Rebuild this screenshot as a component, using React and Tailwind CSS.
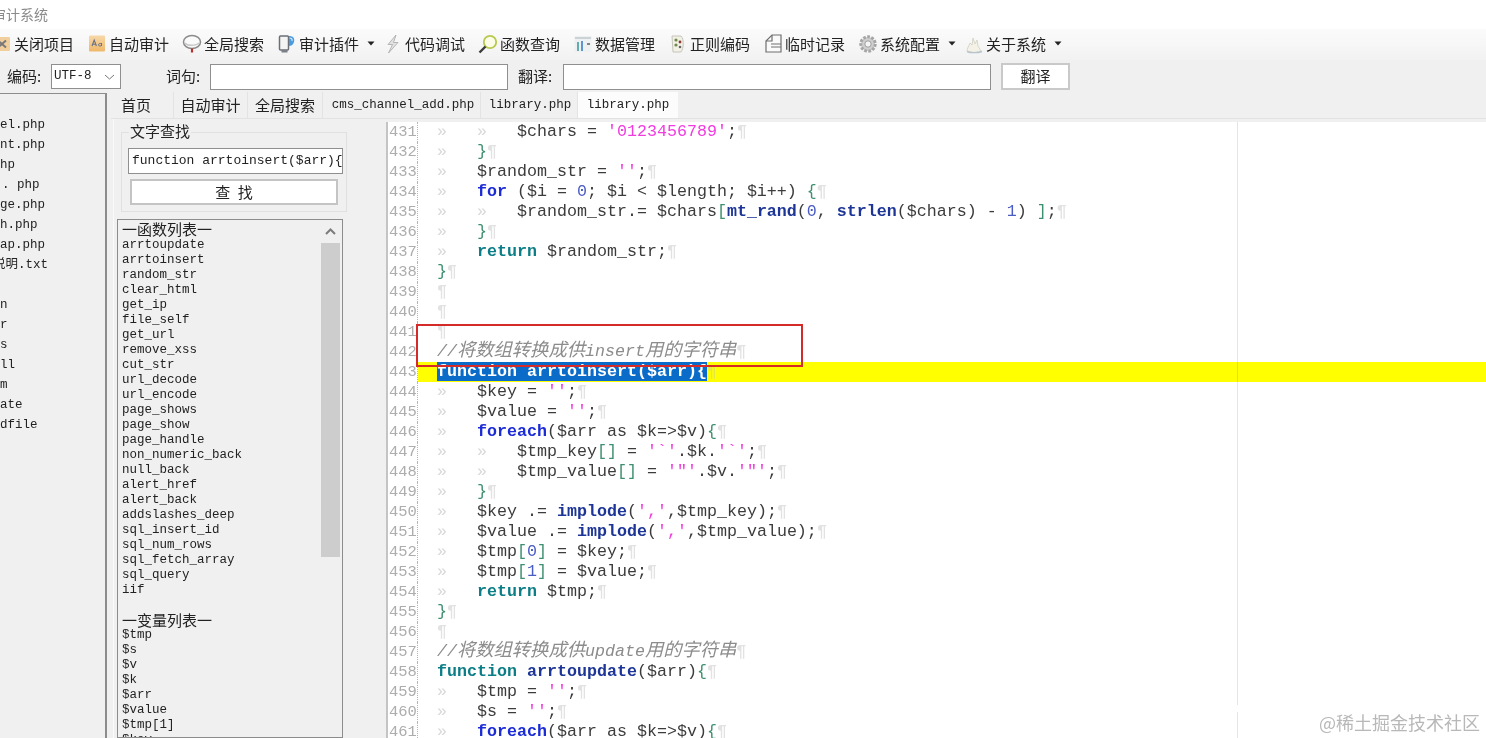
import React from "react";

const CJK = { fontFamily: '"Noto Sans CJK SC", "Liberation Sans", sans-serif' };
const MONO = { fontFamily: '"Liberation Mono", "Noto Sans CJK SC", monospace' };

const C = {
  v: "text-[#3c3c3c]",
  s: "text-[#f23ce0]",
  k: "text-[#1b2bd6] font-bold",
  r: "text-[#0b7d86] font-bold",
  f: "text-[#1d3596] font-bold",
  b: "text-[#3f9070]",
  n: "text-[#4a5cc4]",
  c: "text-[#8c8c8c] italic",
  t: "text-[#d8d8d8]",
  p: "text-[#e2e2e2] font-bold",
};

const T1 = ["t", "»   "];
const CMT = ({ a, m, z }) => (
  <span className={C.c}>
    {"//"}
    <span className="text-[18.3px] leading-[0]" style={CJK}>{a}</span>
    {m}
    <span className="text-[18.3px] leading-[0]" style={CJK}>{z}</span>
  </span>
);

const lines = [
  [T1, T1, ["v", "$chars = "], ["s", "'0123456789'"], ["v", ";"]],
  [T1, ["b", "}"]],
  [T1, ["v", "$random_str = "], ["s", "''"], ["v", ";"]],
  [T1, ["k", "for"], ["v", " ($i = "], ["n", "0"], ["v", "; $i < $length; $i++) "], ["b", "{"]],
  [T1, T1, ["v", "$random_str.= $chars"], ["b", "["], ["f", "mt_rand"], ["v", "("], ["n", "0"], ["v", ", "], ["f", "strlen"], ["v", "($chars) - "], ["n", "1"], ["v", ") "], ["b", "]"], ["v", ";"]],
  [T1, ["b", "}"]],
  [T1, ["r", "return"], ["v", " $random_str;"]],
  [["b", "}"]],
  [],
  [],
  [],
  "c1",
  "sel",
  [T1, ["v", "$key = "], ["s", "''"], ["v", ";"]],
  [T1, ["v", "$value = "], ["s", "''"], ["v", ";"]],
  [T1, ["k", "foreach"], ["v", "($arr as $k=>$v)"], ["b", "{"]],
  [T1, T1, ["v", "$tmp_key"], ["b", "[]"], ["v", " = "], ["s", "'`'"], ["v", ".$k."], ["s", "'`'"], ["v", ";"]],
  [T1, T1, ["v", "$tmp_value"], ["b", "[]"], ["v", " = "], ["s", "'\"'"], ["v", ".$v."], ["s", "'\"'"], ["v", ";"]],
  [T1, ["b", "}"]],
  [T1, ["v", "$key .= "], ["f", "implode"], ["v", "("], ["s", "','"], ["v", ",$tmp_key);"]],
  [T1, ["v", "$value .= "], ["f", "implode"], ["v", "("], ["s", "','"], ["v", ",$tmp_value);"]],
  [T1, ["v", "$tmp"], ["b", "["], ["n", "0"], ["b", "]"], ["v", " = $key;"]],
  [T1, ["v", "$tmp"], ["b", "["], ["n", "1"], ["b", "]"], ["v", " = $value;"]],
  [T1, ["r", "return"], ["v", " $tmp;"]],
  [["b", "}"]],
  [],
  "c2",
  [["r", "function"], ["v", " "], ["f", "arrtoupdate"], ["v", "($arr)"], ["b", "{"]],
  [T1, ["v", "$tmp = "], ["s", "''"], ["v", ";"]],
  [T1, ["v", "$s = "], ["s", "''"], ["v", ";"]],
  [T1, ["k", "foreach"], ["v", "($arr as $k=>$v)"], ["b", "{"]],
];

function CodeRow({ line, num }) {
  const sel = line === "sel";
  let body;
  if (sel) {
    body = <span className="bg-[#0a6cc8] text-white font-bold">{"function arrtoinsert($arr){"}</span>;
  } else if (line === "c1") {
    body = <CMT a="将数组转换成供" m="insert" z="用的字符串" />;
  } else if (line === "c2") {
    body = <CMT a="将数组转换成供" m="update" z="用的字符串" />;
  } else {
    body = line.map(([k, txt], i) => (
      <span key={i} className={C[k]}>{txt}</span>
    ));
  }
  return (
    <div className="flex h-5 shrink-0 leading-5">
      <div className="w-[30px] shrink-0 border-r border-dotted border-[#b5b5b5] pl-[1px] text-[15.5px] text-[#adadad]">{num}</div>
      <div className={`flex-1 whitespace-pre pl-[19px] text-[16.67px] ${sel ? "bg-[#ffff00]" : ""}`}>
        {body}
        <span className={sel ? "text-[#e6e64a] font-bold" : C.p}>¶</span>
      </div>
    </div>
  );
}

const Caret = () => (
  <svg width="8" height="5" viewBox="0 0 8 5" className="shrink-0"><path d="M0.5 0.5h7L4 4.5z" fill="#222" /></svg>
);

const icons = {
  close: (
    <svg width="16" height="16" viewBox="0 0 16 16"><rect x="0" y="1" width="16" height="14" rx="1" fill="#f1cf9d" /><path d="M4 4.5l8 7M12 4.5l-8 7" stroke="#77767a" strokeWidth="2" /></svg>
  ),
  auto: (
    <svg width="16" height="17" viewBox="0 0 16 17"><defs><linearGradient id="ag" x1="0" y1="0" x2="0" y2="1"><stop offset="0" stopColor="#f7d8a8" /><stop offset="1" stopColor="#efb869" /></linearGradient></defs><rect x="0" y="0.5" width="16" height="16" rx="1" fill="url(#ag)" /><path d="M3 11l2.2-6 2.2 6M3.8 9.3h2.8" stroke="#66708a" strokeWidth="1.1" fill="none" /><path d="M12.5 8v3M12.5 9c-.8-.8-3-.7-3 .8s2.2 1.6 3 .5" stroke="#66708a" strokeWidth="1" fill="none" /></svg>
  ),
  search: (
    <svg width="20" height="20" viewBox="0 0 20 20"><ellipse cx="10" cy="8" rx="8.500" ry="6.500" fill="#fafafa" stroke="#8b8b8b" strokeWidth="1.5" /><path d="M3 9c2 3 11 3 14 0" stroke="#c8c8c8" strokeWidth="1.5" fill="none" /><path d="M10 14.500v4" stroke="#b5332e" strokeWidth="2.2" /></svg>
  ),
  plugin: (
    <svg width="18" height="20" viewBox="0 0 18 20"><rect x="1.500" y="2" width="9" height="14" rx="1" fill="#f4f4f4" stroke="#6a6f78" strokeWidth="1.5" /><path d="M11 2c4 0 6 2 5 6-1 3-3 4-5 4z" fill="#4b9be0" /><path d="M11.500 4c2 0 3 1 2.500 3" stroke="#cfe6fa" strokeWidth="1.2" fill="none" /><rect x="3.500" y="16" width="6" height="2.500" fill="#7a7f88" /></svg>
  ),
  debug: (
    <svg width="16" height="20" viewBox="0 0 16 20"><path d="M11 1L3 10.500h4.500L3.500 19 13 8.500H8.500z" fill="#e2e2e2" stroke="#a8a8a8" strokeWidth="0.8" /></svg>
  ),
  lens: (
    <svg width="20" height="20" viewBox="0 0 20 20"><circle cx="12" cy="8" r="6.200" fill="#fbfde8" stroke="#b9c94e" strokeWidth="1.8" /><path d="M7.500 12.500L1.500 18.500" stroke="#3b3b3b" strokeWidth="2.4" /></svg>
  ),
  data: (
    <svg width="18" height="18" viewBox="0 0 18 18"><rect x="0.500" y="1" width="17" height="16" fill="#eef1f2" /><path d="M1 3h16" stroke="#a9b4b8" /><path d="M4 7v9" stroke="#3e9c9e" strokeWidth="1.6" /><path d="M8 6v10" stroke="#3a7fc4" strokeWidth="1.6" /><path d="M13 9h3" stroke="#555" strokeWidth="1.4" /></svg>
  ),
  regex: (
    <svg width="16" height="20" viewBox="0 0 16 20"><path d="M2 2h9c3 3 3 12 0 16H3z" fill="#f3f0e6" stroke="#c5c5bb" /><circle cx="6" cy="6" r="1.600" fill="#6f8a4c" /><circle cx="10" cy="8" r="1.400" fill="#8a3b36" /><circle cx="6" cy="11" r="1.600" fill="#6f8a4c" /><circle cx="10" cy="13" r="1.300" fill="#666" /></svg>
  ),
  note: (
    <svg width="17" height="19" viewBox="0 0 17 19"><path d="M1 18V7l6-6h9v17z" fill="#fafafa" stroke="#6f6f6f" strokeWidth="1.2" /><path d="M7 1v6H1M6 10h10M6 13h10" stroke="#6f6f6f" strokeWidth="1.2" fill="none" /></svg>
  ),
  gear: (
    <svg width="20" height="20" viewBox="0 0 20 20"><circle cx="10" cy="10" r="7" fill="#c9c9c9" stroke="#a5a5a5" strokeWidth="3.4" strokeDasharray="2.6 1.4" /><circle cx="10" cy="10" r="5.800" fill="#cfcfcf" /><circle cx="10" cy="10" r="3.200" fill="#f4f4f4" stroke="#9d9d9d" /></svg>
  ),
  about: (
    <svg width="17" height="20" viewBox="0 0 17 20"><path d="M1 17c0-3 2-5 3-8l2 2 1-7 2 6 2-4 1 6 3 5c-1 2-13 2-14 0z" fill="#f4f1e6" stroke="#d0cfc2" strokeWidth="0.8" /><path d="M1 17.500c3 1.500 11 1.500 15 0" stroke="#b8c4cc" strokeWidth="1.4" fill="none" /></svg>
  ),
};

const tools = [
  ["close", "关闭项目"],
  ["auto", "自动审计"],
  ["search", "全局搜索"],
  ["plugin", "审计插件", true],
  ["debug", "代码调试"],
  ["lens", "函数查询"],
  ["data", "数据管理"],
  ["regex", "正则编码"],
  ["note", "临时记录"],
  ["gear", "系统配置", true],
  ["about", "关于系统", true],
];

function Tool({ icon, label, caret }) {
  return (
    <div className={`flex shrink-0 items-center ${caret ? "w-[106px]" : "w-[95px]"}`}>
      <div className="flex w-[30px] shrink-0 items-center justify-center pl-[16px] [&>svg]:shrink-0">{icons[icon]}</div>
      <span className="ml-[5px] shrink-0 text-[15px] leading-5 whitespace-nowrap text-[#222]">{label}</span>
      {caret && <span className="ml-[8px] flex"><Caret /></span>}
    </div>
  );
}

const files = [
  ["el.php", ""],
  ["nt.php", ""],
  ["hp", ""],
  [". php", "pl-[2px]"],
  ["ge.php", ""],
  ["h.php", ""],
  ["ap.php", ""],
  ["说明.txt", "-ml-[7px]"],
  ["", ""],
  ["n", ""],
  ["r", ""],
  ["s", ""],
  ["ll", ""],
  ["m", ""],
  ["ate", ""],
  ["dfile", ""],
];

const funcs = ["arrtoupdate", "arrtoinsert", "random_str", "clear_html", "get_ip", "file_self", "get_url", "remove_xss", "cut_str", "url_decode", "url_encode", "page_shows", "page_show", "page_handle", "non_numeric_back", "null_back", "alert_href", "alert_back", "addslashes_deep", "sql_insert_id", "sql_num_rows", "sql_fetch_array", "sql_query", "iif"];
const vars = ["$tmp", "$s", "$v", "$k", "$arr", "$value", "$tmp[1]", "$key"];

const tabs = [
  ["首页", "w-[59px] pl-[6px]", false],
  ["自动审计", "w-[74px] justify-center", false],
  ["全局搜索", "w-[75px] justify-center", false],
  ["cms_channel_add.php", "w-[158px] justify-center pl-[3px]", true],
  ["library.php", "w-[97px] justify-center pl-[2px]", true],
];

export default function App() {
  return (
    <div className="relative flex h-[738px] w-[1486px] flex-col overflow-hidden bg-white text-black blur-[0.4px]" style={CJK}>
      {/* title */}
      <div className="h-[29px] shrink-0 overflow-hidden bg-white pt-[4px] text-[14px] leading-5 text-[#8a8a8a]">
        <div className="-ml-[8px]">审计系统</div>
      </div>

      {/* toolbar */}
      <div className="flex h-[31px] shrink-0 items-center overflow-hidden bg-gradient-to-b from-[#fbfbfb] to-[#f2f2f2] pb-[2px]">
        <div className="-ml-[21px] flex items-center">
          {tools.map(([i, l, c]) => <Tool key={l} icon={i} label={l} caret={c} />)}
        </div>
      </div>

      {/* form row */}
      <div className="flex h-[32px] shrink-0 items-center bg-[#f0f0f0] pt-[1px] text-[15px] text-[#222]">
        <span className="ml-[7px] w-[44px] shrink-0">编码:</span>
        <div className="flex h-[25px] w-[70px] shrink-0 items-center justify-between border border-[#8f8f8f] bg-white pr-[5px] pl-[2px] text-[12.5px]" style={MONO}>
          <span>UTF-8</span>
          <svg width="11" height="6" viewBox="0 0 11 6"><path d="M1 1l4.500 4L10 1" stroke="#777" fill="none" /></svg>
        </div>
        <span className="ml-[45px] w-[44px] shrink-0">词句:</span>
        <div className="h-[26px] w-[298px] shrink-0 border border-[#8f8f8f] bg-white" />
        <span className="ml-[10px] w-[45px] shrink-0">翻译:</span>
        <div className="h-[26px] w-[428px] shrink-0 border border-[#8f8f8f] bg-white" />
        <div className="ml-[10px] flex h-[27px] w-[69px] shrink-0 items-center justify-center border-2 border-[#c9c9c9] bg-white text-[15px]">翻译</div>
      </div>

      {/* main */}
      <div className="flex min-h-0 flex-1 bg-[#f0f0f0]">
        {/* file list */}
        <div className="mt-[1px] w-[107px] shrink-0 overflow-hidden border-t border-r-2 border-[#8c8c8c] bg-[#f0f0f0] pt-[21px] text-[12.5px] leading-5 text-[#222]" style={MONO}>
          {files.map(([f, cls], i) => (
            <div key={i} className={`h-5 whitespace-pre ${cls}`}>{f}</div>
          ))}
        </div>

        {/* right */}
        <div className="ml-[4px] flex min-w-0 flex-1 flex-col">
          <div className="flex h-[26px] shrink-0 pl-[4px] text-[15px] text-[#222]">
            {tabs.map(([t, cls, mono]) => (
              <div key={t} className={`flex items-center border-r border-[#e3e3e3] pt-[1px] ${cls} ${mono ? "text-[12.5px]" : ""}`} style={mono ? MONO : undefined}>
                {t}
              </div>
            ))}
            <div className="flex w-[100px] items-center justify-center bg-[#fcfcfc] text-[12.5px]" style={MONO}>library.php</div>
          </div>

          <div className="flex min-h-0 flex-1 border-t border-[#e2e2e2]">
            {/* middle */}
            <div className="ml-[2px] flex w-[273px] shrink-0 flex-col border-l border-[#fafafa]">
              <div className="relative mt-[13px] ml-[7px] flex h-[80px] w-[226px] shrink-0 flex-col border border-[#e0e0e0]">
                <span className="absolute -top-[12px] left-[7px] bg-[#f0f0f0] px-[1px] text-[15px] leading-5 text-[#222]">文字查找</span>
                <div className="mt-[15px] ml-[6px] flex h-[26px] w-[215px] items-center overflow-hidden border border-[#8f8f8f] bg-white pl-[3px] text-[13px] whitespace-pre text-[#222]" style={MONO}>
                  {"function arrtoinsert($arr){"}
                </div>
                <div className="mt-[5px] ml-[8px] flex h-[26px] w-[208px] items-center justify-center border-2 border-[#c4c4c4] bg-white text-[15px] [word-spacing:4px] text-[#222]">查 找</div>
              </div>

              <div className="mt-[7px] ml-[3px] flex min-h-0 w-[226px] flex-1 border border-[#8c8c8c] bg-[#f0f0f0]">
                <div className="min-w-0 flex-1 overflow-hidden pt-[2px] pl-[4px] text-[12.5px] leading-[15px] text-[#222]" style={MONO}>
                  <div className="h-[15px] overflow-visible text-[15px] leading-[13px]" style={CJK}>一函数列表一</div>
                  <div className="h-[1px]" />
                  {funcs.map((f) => <div key={f} className="h-[15px]">{f}</div>)}
                  <div className="h-[15px]" />
                  <div className="h-[15px] text-[15px] leading-[13px]" style={CJK}>一变量列表一</div>
                  {vars.map((f) => <div key={f} className="h-[15px]">{f}</div>)}
                </div>
                <div className="mr-[2px] flex w-[19px] shrink-0 flex-col">
                  <div className="flex h-[23px] shrink-0 items-center justify-center">
                    <svg width="11" height="7" viewBox="0 0 11 7"><path d="M1 6l4.500-4.500L10 6" stroke="#7c7c7c" strokeWidth="2" fill="none" /></svg>
                  </div>
                  <div className="h-[314px] shrink-0 bg-[#cdcdcd]" />
                </div>
              </div>
            </div>

            {/* editor */}
            <div className="relative mt-[3px] flex min-w-0 flex-1 flex-col overflow-hidden border-l-2 border-[#c4c4c4] bg-white" style={MONO}>
              {lines.map((l, i) => <CodeRow key={i} line={l} num={431 + i} />)}
              <div className="absolute top-0 bottom-0 left-[849px] w-px bg-black/10" />
            </div>
          </div>
        </div>
      </div>

      {/* annotations */}
      <div className="absolute top-[324px] left-[416px] h-[43px] w-[387px] border-2 border-[#d42a2a]" />
      <div className="absolute top-[705px] left-[1235px] h-[7px] w-[5px] bg-white" />
      <div className="absolute top-[710px] right-[6px] text-[18px] leading-6 whitespace-nowrap text-[#b8b8b8]">@稀土掘金技术社区</div>
    </div>
  );
}
